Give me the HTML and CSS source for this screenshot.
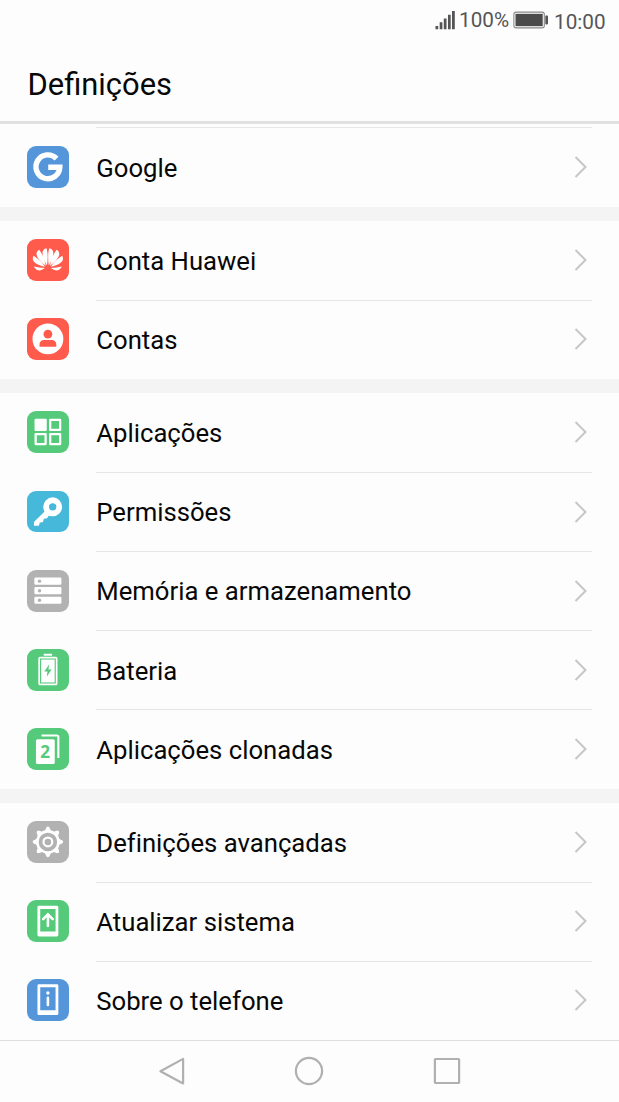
FILE: index.html
```html
<!DOCTYPE html>
<html lang="pt">
<head>
<meta charset="utf-8">
<title>Definições</title>
<link rel="stylesheet" href="styles.css">
</head>
<body>
<svg class="defs" width="0" height="0">
  <symbol id="chevron" viewBox="0 0 16 24"><path d="M2.5 2 12.5 12 2.5 22" fill="none" stroke="#c6c6c6" stroke-width="2"/></symbol>
</svg>
<div class="screen">
  <div class="status">
    <svg class="signal" width="20" height="20" viewBox="0 0 20 20"><path d="M.5 16h2.7v3.2H.5zM4.7 12.3h2.7v6.9H4.7zM8.8 8.5h2.7v10.7H8.8zM13 4.8h2.7v14.4H13zM17 1h2.8v18.2H17z" fill="#555"/></svg>
    <span class="percent">100%</span>
    <svg class="battery" width="36" height="18" viewBox="0 0 36 18"><rect x=".9" y="1.1" width="30.4" height="15.8" rx="2.2" fill="#fff" stroke="#888" stroke-width="1.1"/><rect x="2.5" y="2.8" width="27.2" height="12.4" fill="#4b4b4b"/><rect x="32.3" y="4.6" width="2.7" height="8.8" rx=".8" fill="#555"/></svg>
    <span class="clock">10:00</span>
  </div>
  <header class="header"><h1>Definições</h1></header>
  <main class="list">
    <section class="group first">
      <div class="row">
        <svg class="icon blue" viewBox="0 0 42 42"><path d="M29.7 12.6A12 12 0 1 0 33 21.3H21.3" fill="none" stroke="#fff" stroke-width="5.4"/></svg>
        <span class="label">Google</span><svg class="chev"><use href="#chevron"/></svg>
      </div>
    </section>
    <section class="group">
      <div class="row">
        <svg class="icon red" viewBox="0 0 42 42"><g fill="#fff"><path id="petals" d="M20.1 26.6C17.4 21.6 15.5 17.5 15.6 13.4c.1-2.2 1.6-3.7 4-4.2 1.4 4 1.5 11 .5 17.4zM18.9 27C13.6 22.4 9.9 18.8 9.6 15.2c-.1-1.7.8-3.3 2.7-4.4C15.5 15 17.9 21 18.9 27zM18.1 28C11.6 26.4 6.9 24.1 6 20.8c-.4-1.5-.1-2.8.7-3.9C10.8 19.6 15.2 23.4 18.1 28zM17.9 29.2c-2.6 2-4.9 2.7-6.9 2.2-1.9-.5-3.3-1.8-4-3.7C10.4 28.4 14.2 29 17.9 29.2z"/><use href="#petals" transform="matrix(-1 0 0 1 42 0)"/></g></svg>
        <span class="label">Conta Huawei</span><svg class="chev"><use href="#chevron"/></svg>
      </div>
      <div class="row">
        <svg class="icon red" viewBox="0 0 42 42"><circle cx="21" cy="21" r="15.5" fill="#fff"/><g fill="#ff5b4d"><circle cx="21" cy="16.3" r="4.4"/><path d="M12.6 29v-2.8c0-2.4 2-4.1 4.4-4.1h8c2.4 0 4.4 1.7 4.4 4.1V29z"/></g></svg>
        <span class="label">Contas</span><svg class="chev"><use href="#chevron"/></svg>
      </div>
    </section>
    <section class="group">
      <div class="row">
        <svg class="icon green" viewBox="0 0 42 42"><g fill="none" stroke="#fff" stroke-width="2.3" stroke-linejoin="round"><path d="M8.7 9h10v10h-10z" fill="#fff"/><path d="M23.3 9h10v10h-10zM8.7 23.2h10v10h-10zM23.3 23.2h10v10h-10z"/></g></svg>
        <span class="label">Aplicações</span><svg class="chev"><use href="#chevron"/></svg>
      </div>
      <div class="row">
        <svg class="icon cyan" viewBox="0 0 42 42"><circle cx="25.8" cy="15.9" r="6.6" fill="none" stroke="#fff" stroke-width="5.8"/><path d="M18.2 20 7 31.2V35h5l.8-3.1 3.2-.7 1-3.4 3.2-.4 2.7-4z" fill="#fff"/></svg>
        <span class="label">Permissões</span><svg class="chev"><use href="#chevron"/></svg>
      </div>
      <div class="row">
        <svg class="icon gray" viewBox="0 0 42 42"><g fill="#fff"><rect x="7.4" y="7.6" width="27.2" height="7.2" rx="1.3"/><rect x="7.4" y="17.2" width="27.2" height="7.2" rx="1.3"/><rect x="7.4" y="26.8" width="27.2" height="7.2" rx="1.3"/></g><g fill="#b2b2b2"><circle cx="12.6" cy="11.2" r="1.7"/><circle cx="12.6" cy="20.8" r="1.7"/><circle cx="12.6" cy="30.4" r="1.7"/></g></svg>
        <span class="label">Memória e armazenamento</span><svg class="chev"><use href="#chevron"/></svg>
      </div>
      <div class="row">
        <svg class="icon green" viewBox="0 0 42 42"><rect x="16.8" y="4.8" width="8.4" height="2" rx=".5" fill="#fff"/><rect x="12.2" y="8.6" width="17.6" height="27" rx="1" fill="none" stroke="#fff" stroke-width="1.7"/><rect x="14.2" y="10.6" width="13.6" height="23" fill="#fff"/><path d="m22.4 15.2-5 7.4h3.2l-.8 5.3 4.9-7.2h-3.2z" fill="#55ca7a"/></svg>
        <span class="label">Bateria</span><svg class="chev"><use href="#chevron"/></svg>
      </div>
      <div class="row">
        <svg class="icon green" viewBox="0 0 42 42"><path d="M14.6 7.6h15.3q1.6 0 1.6 1.6v21" fill="none" stroke="#fff" stroke-width="2.1"/><rect x="9" y="11.3" width="18.9" height="25" rx="1.6" fill="#fff"/><text class="two" x="18.2" y="30.4" text-anchor="middle">2</text></svg>
        <span class="label">Aplicações clonadas</span><svg class="chev"><use href="#chevron"/></svg>
      </div>
    </section>
    <section class="group">
      <div class="row">
        <svg class="icon gray" viewBox="0 0 42 42"><g fill="none" stroke="#fff"><circle cx="21" cy="21" r="10.6" stroke-width="2.6"/><circle cx="21" cy="21" r="4.4" stroke-width="2.3"/></g><g fill="#fff"><path id="tooth" d="M17.6 10.5 19.6 6.3q1.4-1.4 2.8 0l2 4.2zM17.6 31.5l2 4.2q1.4 1.4 2.8 0l2-4.2zM10.5 17.6 6.3 19.6q-1.4 1.4 0 2.8l4.2 2zM31.5 17.6l4.2 2q1.4 1.4 0 2.8l-4.2 2z"/><use href="#tooth" transform="rotate(45 21 21)"/></g></svg>
        <span class="label">Definições avançadas</span><svg class="chev"><use href="#chevron"/></svg>
      </div>
      <div class="row">
        <svg class="icon green" viewBox="0 0 42 42"><path d="M12 5.7h18q1.5 0 1.5 1.5v28q0 1.5-1.5 1.5H12q-1.5 0-1.5-1.5v-28q0-1.5 1.5-1.5zM13.3 9.1v22.5h15.4V9.1z" fill="#fff" fill-rule="evenodd"/><path d="M21 26V14.5M16.2 19.2 21 14.3l4.8 4.9" fill="none" stroke="#fff" stroke-width="2.6" stroke-linecap="round"/></svg>
        <span class="label">Atualizar sistema</span><svg class="chev"><use href="#chevron"/></svg>
      </div>
      <div class="row">
        <svg class="icon blue" viewBox="0 0 42 42"><path d="M12 5.3h18q1.5 0 1.5 1.5v28q0 1.5-1.5 1.5H12q-1.5 0-1.5-1.5v-28q0-1.5 1.5-1.5zM13.3 8.4v23h15.4v-23z" fill="#fff" fill-rule="evenodd"/><circle cx="21" cy="14.1" r="1.7" fill="#fff"/><path d="M21 18.8v7.3" stroke="#fff" stroke-width="2.6" stroke-linecap="round"/></svg>
        <span class="label">Sobre o telefone</span><svg class="chev"><use href="#chevron"/></svg>
      </div>
    </section>
  </main>
  <nav class="nav">
    <svg viewBox="0 0 30 30"><path d="M26.1 2.9v24.6L3.4 15.2z"/></svg>
    <svg viewBox="0 0 30 30"><circle cx="15" cy="15" r="13.1"/></svg>
    <svg viewBox="0 0 30 30"><rect x="2.9" y="3" width="24.2" height="24" rx=".6"/></svg>
  </nav>
</div>
</body>
</html>
```
FILE: styles.css
```css
* { box-sizing: border-box; }
body { margin: 0; background: #fdfdfd; font-family: Roboto, sans-serif; color: #080808; }
.defs { display: block; height: 0; }
.screen { width: 619px; height: 1102px; display: flex; flex-direction: column; overflow: hidden; }

.status { height: 44px; display: flex; align-items: flex-start; padding-left: 435px; font-size: 20.7px; line-height: 24px; color: #555; white-space: nowrap; }
.status svg { flex: none; }
.signal { margin-top: 10px; }
.percent { width: 57.5px; padding: 8px 0 0 4px; }
.battery { margin-top: 11px; }
.clock { padding: 10px 0 0 5.5px; }

.header { height: 80px; padding: 23px 27.5px 0; border-bottom: 3px solid #e1e1e1; }
.header h1 { margin: 0; font-size: 30.9px; line-height: 36px; font-weight: 400; }

.list { height: 916px; display: flex; flex-direction: column; gap: 14px; background: #f4f4f4; }
.group { background: #fdfdfd; }
.first { padding-top: 3.4px; }
.row { height: 79.15px; display: flex; align-items: center; padding-left: 27.2px; background: linear-gradient(#e6e6e6, #e6e6e6) 96px 0 / 496px 1px no-repeat; }
.group:not(.first) .row:first-child { background: none; }
.icon { width: 41.8px; height: 41.8px; border-radius: 9px; flex: none; }
.blue { background: #5596db; }
.red { background: #ff5b4d; }
.green { background: #55ca7a; }
.cyan { background: #46b8da; }
.gray { background: #b2b2b2; }
.two { font: 700 17.2px "Open Sans", sans-serif; fill: #55ca7a; }
.label { width: 477px; margin-left: 27.3px; font-size: 25.7px; line-height: 32px; padding-top: 1.6px; white-space: nowrap; font-variant-ligatures: none; }
.chev { width: 16px; height: 24px; flex: none; }

.nav { height: 62px; padding: 0 1px 2px 0; border-top: 1px solid #dedede; display: flex; align-items: center; justify-content: center; gap: 107.5px; }
.nav svg { width: 30px; height: 30px; fill: none; stroke: #b0b0b0; stroke-width: 2.2; stroke-linejoin: round; }
```
